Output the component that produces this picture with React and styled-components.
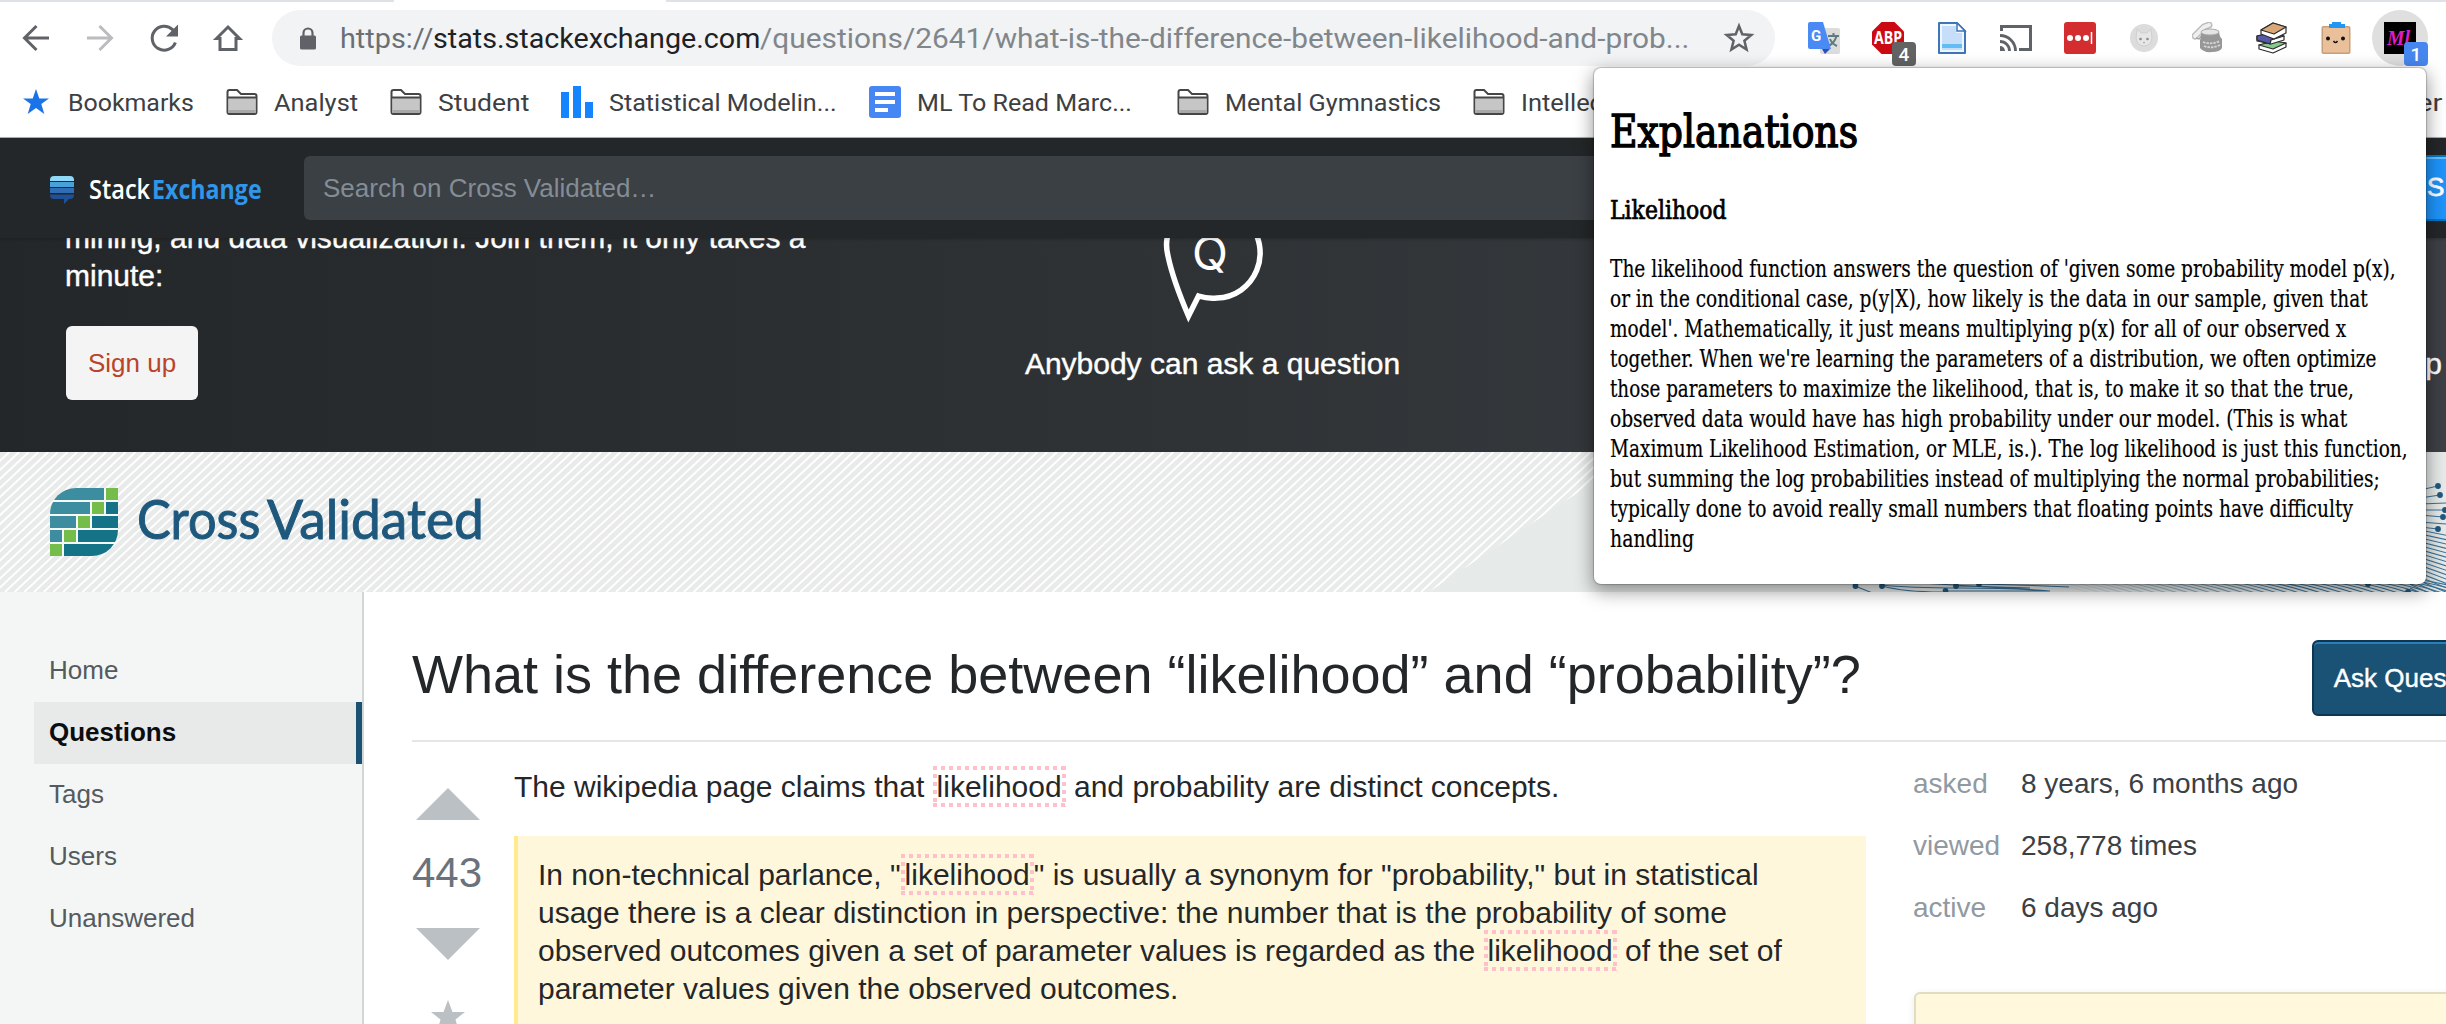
import React, { useLayoutEffect, useRef, useState } from "react";
import styled, { createGlobalStyle, css } from "styled-components";

const Global = createGlobalStyle`
  * { box-sizing: border-box; }
  html, body { margin: 0; padding: 0; background: #fff; overflow: hidden; }
  p, h1, h2, h3, blockquote, dl, dt, dd, ul { margin: 0; padding: 0; }
`;

const arial = `"Liberation Sans", Arial, sans-serif`;
const system = `Roboto, "Liberation Sans", sans-serif`;

/* ---------- text fitted to a known measure ---------- */

const FitBox = styled.span`
  display: inline-block;
  width: ${(p) => p.$w}px;
  white-space: nowrap;
  flex: none;
`;
const FitInner = styled.span`
  display: inline-block;
  transform-origin: 0 50%;
`;

function Fit({ w, children, className }) {
  const ref = useRef(null);
  const [style, setStyle] = useState({});
  useLayoutEffect(() => {
    setStyle({ transform: `scaleX(${w / ref.current.offsetWidth})` });
  }, [w]);
  return (
    <FitBox $w={w} className={className}>
      <FitInner ref={ref} style={style}>{children}</FitInner>
    </FitBox>
  );
}

/* ---------- page ---------- */

const Page = styled.div`
  position: relative;
  width: 2446px;
  height: 1024px;
  overflow: hidden;
  background: #fff;
  font-family: ${arial};
  color: #242729;
`;

/* ---------- browser chrome ---------- */

const TabEdge = styled.div`
  display: flex;
  gap: 272px;
  height: 2px;
`;
const TabPiece = styled.div`
  flex: ${(p) => (p.$w ? `0 0 ${p.$w}px` : 1)};
  background: #dee1e6;
`;
const Toolbar = styled.div`
  display: flex;
  align-items: center;
  height: 72px;
  padding-left: 20px;
  font-family: ${system};
`;
const NavIcons = styled.div`
  display: flex;
  gap: 32px;
  width: 252px;
`;
const Omnibox = styled.div`
  display: flex;
  align-items: center;
  width: 1503px;
  height: 56px;
  padding: 0 20px 0 26px;
  border-radius: 28px;
  background: #f1f3f4;
  font-size: 28.5px;
  color: #80868b;
`;
const Lock = styled.svg`
  width: 20px;
  height: 24px;
  margin-right: 22px;
`;
const UrlPart = styled(Fit)`
  color: #80868b;
`;
const DarkUrl = styled(Fit)`
  color: #202124;
`;
const SchemeUrl = styled(Fit)`
  color: #6b6f74;
`;
const StarButton = styled.svg`
  width: 32px;
  height: 32px;
  margin-left: auto;
`;
const Extensions = styled.div`
  display: flex;
  gap: 32px;
  margin-left: 33px;
`;
const ExtCell = styled.div`
  position: relative;
  display: flex;
  width: 32px;
  height: 32px;
  ${(p) =>
    p.$active &&
    css`
      &::before {
        content: "";
        position: absolute;
        inset: -12px;
        border-radius: 50%;
        background: #dfdfdf;
      }
    `}
`;
const ExtSvg = styled.svg`
  position: relative;
  width: 32px;
  height: 32px;
`;
const Badge = styled.span`
  position: absolute;
  left: 20px;
  top: 20px;
  width: 24px;
  height: 24px;
  border-radius: 4px;
  background: ${(p) => p.$bg};
  color: #fff;
  font: 500 19px/26px ${system};
  text-align: center;
`;
const Bookmarks = styled.div`
  position: relative;
  display: flex;
  align-items: center;
  height: 64px;
  padding: 0 0 7px 20px;
  border-bottom: 1px solid #b6b4b6;
  font-family: ${system};
  font-size: 24.5px;
  color: #3c4043;
`;
const Bookmark = styled.div`
  display: flex;
  align-items: center;
  gap: ${(p) => p.$gap || 16}px;
  margin-right: ${(p) => p.$after || 0}px;
`;
const BmIcon = styled.svg`
  width: 32px;
  height: 32px;
  flex: none;
`;
const LastBookmark = styled.span`
  position: absolute;
  left: 2417px;
  top: 14px;
`;

/* ---------- site top bar ---------- */

const TopBar = styled.div`
  position: relative;
  z-index: 1;
  display: flex;
  align-items: center;
  height: 100px;
  padding-left: 50px;
  background: #242729;
  box-shadow: 0 1px 3px rgba(0, 0, 0, 0.25);
`;
const SeMark = styled.svg`
  width: 24px;
  height: 28px;
  margin: 3px 15px 0 0;
`;
const SeWord = styled.div`
  display: flex;
  gap: 2px;
  margin: 1px 42px 0 0;
  font: 600 27px/32px "Open Sans", sans-serif;
  color: #fff;
`;
const SeBlue = styled.span`
  color: #2f96e8;
  font-weight: 700;
`;
const Search = styled.div`
  width: 2090px;
  height: 64px;
  padding-left: 19px;
  border-radius: 6px;
  background: #3b4045;
  color: #848d95;
  font-size: 26px;
  line-height: 65px;
`;
const SignUpBlue = styled.div`
  width: 52px;
  height: 66px;
  padding-left: 33px;
  border: solid #0077cc;
  border-width: 2px 0;
  box-shadow: inset 0 2px 0 #66bfff;
  background: #1e94fb;
  color: #fff;
  font-size: 26px;
  line-height: 60px;
  -webkit-text-stroke: 0.8px #fff;
`;

/* ---------- hero ---------- */

const Hero = styled.section`
  display: grid;
  grid-template-columns: 1000px 425px 1fr;
  height: 214px;
  overflow: hidden;
  background: linear-gradient(90deg, #242729 0%, #303336 50%, #3d4045 100%);
  color: #fff;
  font-size: 30px;
  line-height: 38px;
  -webkit-text-stroke: 0.4px #fff;
`;
const Pitch = styled.div`
  margin-top: -19px;
  padding-left: 65px;
  white-space: nowrap;
`;
const SignUp = styled.button`
  display: block;
  width: 132px;
  height: 74px;
  margin: 31px 0 0 1px;
  padding: 0;
  border: 0;
  border-radius: 6px;
  background: #f4f4f4;
  color: #b9442a;
  font: 26px/74px ${arial};
  -webkit-text-stroke: 0;
`;
const AskStep = styled.div`
  display: flex;
  flex-direction: column;
  align-items: center;
`;
const Bubble = styled.svg`
  width: 110px;
  height: 107px;
  -webkit-text-stroke: 0;
`;
const VoteStep = styled.div`
  padding: 107px 4px 0 0;
  text-align: right;
`;

/* ---------- site header ---------- */

const SiteHeader = styled.header`
  position: relative;
  display: flex;
  align-items: center;
  height: 140px;
  padding-left: 50px;
  background: #e6eae9;
`;
const HeaderArt = styled.svg`
  position: absolute;
  inset: 0;
  width: 2446px;
  height: 140px;
`;
const Brand = styled.div`
  position: relative;
  display: flex;
  align-items: center;
`;
const BrandMark = styled.svg`
  width: 68px;
  height: 68px;
  margin-right: 19px;
`;
const BrandWord = styled.div`
  display: flex;
  gap: 7px;
  margin-top: -8px;
  font: 400 55px/64px Lato, sans-serif;
  color: #1f587d;
  -webkit-text-stroke: 1px #1f587d;
`;

/* ---------- body ---------- */

const Body = styled.div`
  display: flex;
  height: 432px;
`;
const SideNav = styled.nav`
  flex: none;
  width: 364px;
  padding: 48px 0 0 34px;
  border-right: 2px solid #d2d6d5;
  background: #f4f6f5;
`;
const NavItem = styled.div`
  height: 62px;
  padding-left: 15px;
  font-size: 26px;
  line-height: 61px;
  color: #535a60;
  ${(p) =>
    p.$active &&
    css`
      background: #e8eae9;
      border-right: 6px solid #1a5276;
      color: #0c0d0e;
      font-weight: 700;
    `}
`;
const Main = styled.main`
  flex: none;
  width: 2146px;
  padding-left: 48px;
`;
const TitleRow = styled.div`
  display: flex;
  align-items: flex-start;
  justify-content: space-between;
  height: 150px;
  padding-top: 48px;
  border-bottom: 2px solid #e4e6e8;
`;
const Title = styled.h1`
  font: 400 54px/68px ${arial};
`;
const AskButton = styled.button`
  width: 198px;
  height: 76px;
  padding: 0;
  border: 2px solid #0e3652;
  border-radius: 6px;
  background: #1a5276;
  box-shadow: inset 0 2px 0 #2a7fb8;
  color: #fff;
  font: 26px/70px ${arial};
  -webkit-text-stroke: 0.4px #fff;
`;
const Columns = styled.div`
  display: grid;
  grid-template-columns: 102px 1352px 1fr;
`;
const Votes = styled.div`
  display: flex;
  flex-direction: column;
  align-items: flex-start;
  padding-top: 46px;
`;
const Arrow = styled.svg`
  width: 64px;
  height: 32px;
  margin-left: 4px;
`;
const Score = styled.div`
  height: 108px;
  font-size: 42px;
  line-height: 106px;
  color: #6a737c;
`;
const Fav = styled.svg`
  width: 34px;
  height: 32px;
  margin: 40px 0 0 19px;
`;
const Post = styled.div`
  padding-top: 26px;
  font-size: 30px;
  line-height: 38px;
`;
const Quote = styled.blockquote`
  height: 260px;
  margin-top: 30px;
  padding: 20px 20px 0 20px;
  border-left: 4px solid #ffeb8e;
  background: #fff7dc;
  white-space: nowrap;
`;
const Line = styled.div``;
const dots = (dir) =>
  `repeating-linear-gradient(${dir}, #ffc0cb 0 4px, transparent 4px 8px)`;
const Term = styled.span`
  padding: 4px;
  background-image: ${dots("90deg")}, ${dots("90deg")}, ${dots("180deg")}, ${dots("180deg")};
  background-size: 100% 4px, 100% 4px, 4px 100%, 4px 100%;
  background-position: 0 0, 0 100%, 0 0, 100% 0;
  background-repeat: no-repeat;
`;
const Aside = styled.aside`
  padding: 24px 0 0 47px;
`;
const Stats = styled.dl`
  display: grid;
  grid-template-columns: 108px 1fr;
  grid-auto-rows: 62px;
  margin-bottom: 40px;
  font-size: 28px;
  line-height: 36px;
  color: #3b4045;
`;
const StatKey = styled.dt`
  color: #9199a1;
`;
const Bulletin = styled.div`
  height: 80px;
  margin-left: 1px;
  border: 2px solid #e0dcbf;
  border-radius: 6px;
  background: #fff8dc;
  box-shadow: 0 2px 8px rgba(0, 0, 0, 0.08);
`;

/* ---------- extension popup ---------- */

const Popup = styled.div`
  position: absolute;
  z-index: 2;
  left: 1594px;
  top: 68px;
  width: 832px;
  height: 516px;
  padding: 33px 0 0 16px;
  border-radius: 7px;
  background: #fff;
  box-shadow: 0 0 1px 1px rgba(0, 0, 0, 0.2), 0 6px 18px 2px rgba(0, 0, 0, 0.38);
  font-family: "DejaVu Serif Condensed", "DejaVu Serif", serif;
  font-stretch: condensed;
  color: #000;
`;
const PopTitle = styled.h2`
  font-size: 44px;
  font-weight: 400;
  line-height: 62px;
  -webkit-text-stroke: 1.3px #000;
`;
const PopSub = styled.h3`
  margin-top: 29px;
  font-size: 26.5px;
  font-weight: 400;
  line-height: 36px;
  -webkit-text-stroke: 0.7px #000;
`;
const PopText = styled.div`
  margin-top: 26px;
  font-size: 24px;
  line-height: 30px;
  -webkit-text-stroke: 0.2px #000;
`;

/* ---------- drawings ---------- */

const navStroke = { fill: "none", stroke: "#5f6368", strokeWidth: 3 };

const Back = ({ color = "#5f6368", flip }) => (
  <ExtSvg viewBox="0 0 32 32">
    <g transform={flip ? "translate(32 0) scale(-1 1)" : undefined} fill="none" stroke={color} strokeWidth="3">
      <path d="M29 16H5M16.5 4L4.5 16l12 12" />
    </g>
  </ExtSvg>
);
const Reload = () => (
  <ExtSvg viewBox="0 0 32 32">
    <path d="M27.4 20.5A12 12 0 1 1 24.6 7.6L27 10" {...navStroke} />
    <path d="M30 2.5v12H18z" fill="#5f6368" />
  </ExtSvg>
);
const Home = () => (
  <ExtSvg viewBox="0 0 32 32">
    <path d="M4.5 16.5L16 5l11.5 11.5H24V27.500H8V16.500z" {...navStroke} strokeLinejoin="miter" />
  </ExtSvg>
);
const Folder = () => (
  <BmIcon viewBox="0 0 32 32">
    <path d="M1.500 26V6q0-2 2-2h7.500l4 4h13.500q2 0 2 2v16q0 2-2 2h-25q-2 0-2-2z" fill="#fff" stroke="#464646" strokeWidth="2" />
    <path d="M2.500 12h27v15h-27z" fill="#c6c6c6" />
    <path d="M2.500 24h27v3h-27z" fill="#a8a8a8" />
    <path d="M1.500 11.500h29" stroke="#464646" strokeWidth="2" />
  </BmIcon>
);

function HeaderDrawing() {
  const stripes = [];
  for (let x = -160; x < 1640; x += 9.7) stripes.push(x);
  const fan = [];
  for (let k = 0; k < 26; k++) fan.push(k);
  const sweep = [];
  for (let x = 2050; x < 2440; x += 11) sweep.push(x);
  const nodes = [
    [2438, 34], [2440, 43], [2445, 58], [2443, 65], [2438, 77], [1855.5, 134], [1882, 134],
    [1956, 134], [1945.5, 139], [1979, 132], [2368, 132], [2408, 140],
  ];
  return (
    <HeaderArt viewBox="0 0 2446 140">
      <clipPath id="stripeArea">
        <path d="M0 0H1639L1429 140H0z" />
      </clipPath>
      <path d="M0 0H1639L1429 140H0z" fill="#e8ebea" />
      <g clipPath="url(#stripeArea)" stroke="#fff" strokeWidth="1.900">
        {stripes.map((x) => (
          <path key={x} d={`M${x} 140L${x + 150} 0`} />
        ))}
      </g>
      <g stroke="#3a7399" strokeWidth="1.100" fill="none">
        <path d="M2420 38L2438 34M2420 46l20-3M2420 52l26-1M2420 58h26M2420 63l23 2M2420 70l26 2M2420 75l18 2" />
        {fan.map((k) => (
          <path key={k} d={`M2410 ${76 + k * 4.1 - k * 0.35}L2450 ${84 + k * 4.1 + k * 0.35}`} />
        ))}
        {sweep.map((x) => (
          <path key={x} d={`M${x - 20} 127Q${x + 15} 132 ${x + 40} 141`} opacity={Math.min(1, (x - 2030) / 250)} />
        ))}
        <path d="M1855 134l20 8M1882 134q22 6 60 6M1880 133q30 3 80 3t90 3M1956 134q50 1 90 5M1979 132q50 1 90 3M1920 131q60 4 110 5M1945 139h100" />
      </g>
      <g fill="#20597f">
        {nodes.map(([x, y]) => (
          <circle key={x + "-" + y} cx={x} cy={y} r="2.900" />
        ))}
      </g>
    </HeaderArt>
  );
}

function CrossValidatedMark() {
  const cells = [];
  for (let r = 0; r < 5; r++) {
    const y = r * 14;
    const g = 56 - r * 14;
    if (g > 0) cells.push([0, y, g - 2, "#3c8da0"]);
    cells.push([g, y, 12, "#74bd4b"]);
    if (g < 56) cells.push([g + 14, y, 54 - g, "#157388"]);
  }
  return (
    <BrandMark viewBox="0 0 68 68">
      <clipPath id="leaf">
        <path d="M26 0H68V42A26 26 0 0 1 42 68H0V26A26 26 0 0 1 26 0z" />
      </clipPath>
      <g clipPath="url(#leaf)">
        <path d="M0 0h68v68H0z" fill="#f6f8f7" />
        {cells.map(([x, y, w, c]) => (
          <rect key={x + "-" + y} x={x} y={y} width={w} height="12" fill={c} />
        ))}
      </g>
    </BrandMark>
  );
}

function ExtensionIcons() {
  return (
    <Extensions>
      <ExtCell>
        <ExtSvg viewBox="0 0 32 32">
          <rect x="12" y="6" width="20" height="26" rx="2" fill="#dcdcdc" />
          <path d="M20 14h11M25.500 11v3M28.500 14q-2 7-8 10M22 17q2 5 7 7" stroke="#5c7a80" strokeWidth="2" fill="none" />
          <path d="M14 27l8 0-5 5z" fill="#2a50b8" />
          <path d="M2 0h13l8 27H2q-2 0-2-2V2q0-2 2-2z" fill="#4a8af4" />
          <text x="3" y="19" fontFamily="Roboto, sans-serif" fontWeight="700" fontSize="15" fill="#fff">G</text>
        </ExtSvg>
      </ExtCell>
      <ExtCell>
        <ExtSvg viewBox="0 0 32 32">
          <path d="M9.500 0h13L32 9.500v13L22.500 32h-13L0 22.500v-13z" fill="#cc0a14" />
          <text x="2" y="22" textLength="28" lengthAdjust="spacingAndGlyphs" fontFamily="Open Sans, sans-serif" fontWeight="700" fontSize="17" fill="#fff">ABP</text>
        </ExtSvg>
        <Badge $bg="#636363">4</Badge>
      </ExtCell>
      <ExtCell>
        <ExtSvg viewBox="0 0 32 32">
          <path d="M3 1h18l8 8v22H3z" fill="#eef6ff" stroke="#3f76b8" strokeWidth="2" strokeLinejoin="round" />
          <path d="M6 4h14v7h6v17H6z" fill="#c6defa" />
          <path d="M21 1v8h8z" fill="#fff" stroke="#3f76b8" strokeWidth="1.500" />
          <path d="M6 22h20v4H6z" fill="#62bdf5" />
        </ExtSvg>
      </ExtCell>
      <ExtCell>
        <ExtSvg viewBox="0 0 32 32">
          <path d="M1.500 9V4.500h29v23H19" fill="none" stroke="#5f6368" strokeWidth="3" />
          <path d="M0 24a5 5 0 0 1 5 5H0z" fill="#5f6368" />
          <path d="M0 19.500a9.500 9.500 0 0 1 9.500 9.500M0 13.500a15.500 15.500 0 0 1 15.500 15.500" fill="none" stroke="#5f6368" strokeWidth="2.800" />
        </ExtSvg>
      </ExtCell>
      <ExtCell>
        <ExtSvg viewBox="0 0 32 32">
          <rect width="32" height="32" rx="3" fill="#d32d2f" />
          <circle cx="6" cy="16" r="3" fill="#fff" />
          <circle cx="14" cy="16" r="3" fill="#fff" />
          <circle cx="22" cy="16" r="3" fill="#fff" />
          <path d="M27.500 10v12" stroke="#fff" strokeWidth="1.500" />
        </ExtSvg>
      </ExtCell>
      <ExtCell>
        <ExtSvg viewBox="0 0 32 32">
          <circle cx="16" cy="16" r="14" fill="#dcdcdc" />
          <path d="M9 7l4 4h6l4-4 1 9q-1 8-8 8t-8-8z" fill="#e6e6e6" stroke="#cfcfcf" />
          <circle cx="12.500" cy="17" r="1.300" fill="#8a8a8a" />
          <circle cx="19.500" cy="17" r="1.300" fill="#8a8a8a" />
          <path d="M15 20h2l-1 1.500z" fill="#8a8a8a" />
        </ExtSvg>
      </ExtCell>
      <ExtCell>
        <ExtSvg viewBox="0 0 32 32">
          <path d="M3 14L12 5l5-2" stroke="#bdbdbd" strokeWidth="7" strokeLinecap="round" fill="none" />
          <path d="M3 14L12 5l5-2" stroke="#efefef" strokeWidth="4" strokeLinecap="round" fill="none" />
          <path d="M4 16l3 1 6-7" stroke="#a5a5a5" strokeWidth="1.500" fill="none" />
          <path d="M9 12q0 4-1 6v8q4 5 12 4 8 0 10-4v-9q-3-3-3-8-9-4-18 3z" fill="#979797" />
          <ellipse cx="18" cy="10" rx="9" ry="3" fill="#e4e4e4" stroke="#aaa" />
          <path d="M11 20q8 3 17-1M12 24q8 3 16-1" stroke="#d6d6d6" strokeWidth="1.800" strokeDasharray="2.500 1" fill="none" />
        </ExtSvg>
      </ExtCell>
      <ExtCell>
        <ExtSvg viewBox="0 0 32 32" stroke="#2b2b2b" strokeWidth="1.200" strokeLinejoin="round">
          <path d="M3 23l15-3 12 1v4L17 31 3 27z" fill="#fff" />
          <path d="M3 23l15-4 12 2-13 6z" fill="#86c98c" />
          <path d="M1 14l13-3 14 3v4l-13 4L1 19z" fill="#fff" />
          <path d="M1 14l13-3 14 3-13 4-1 4-13-4z" fill="#5759a8" />
          <path d="M5 8l12-7 13 4v6l-12 6L5 12z" fill="#fff" />
          <path d="M5 8l12-7 13 4-12 7z" fill="#d9a878" />
        </ExtSvg>
      </ExtCell>
      <ExtCell>
        <ExtSvg viewBox="0 0 32 32">
          <rect x="1.500" y="4" width="29" height="28" rx="2" fill="#c79f7b" />
          <rect x="3" y="5.500" width="26" height="25" fill="#eac09a" />
          <path d="M12 0h9v2h4v4H9V2h3z" fill="#2196f3" />
          <circle cx="8" cy="16.500" r="2" fill="#111" />
          <circle cx="23" cy="16.500" r="2" fill="#111" />
          <path d="M13.500 19q2 3 4 0" stroke="#111" strokeWidth="1.500" fill="none" />
        </ExtSvg>
      </ExtCell>
      <ExtCell $active>
        <ExtSvg viewBox="0 0 32 32">
          <path d="M0 0h32v32H0z" fill="#000" />
          <text x="3" y="23" textLength="23" lengthAdjust="spacingAndGlyphs" fontFamily="Liberation Serif, serif" fontWeight="700" fontStyle="italic" fontSize="20" fill="#e21cc4">Ml</text>
        </ExtSvg>
        <Badge $bg="#4687ef">1</Badge>
      </ExtCell>
    </Extensions>
  );
}

const explanation = [
  [786, "The likelihood function answers the question of 'given some probability model p(x),"],
  [758, "or in the conditional case, p(y|X), how likely is the data in our sample, given that"],
  [736, "model'. Mathematically, it just means multiplying p(x) for all of our observed x"],
  [766, "together. When we're learning the parameters of a distribution, we often optimize"],
  [744, "those parameters to maximize the likelihood, that is, to make it so that the true,"],
  [737, "observed data would have has high probability under our model. (This is what"],
  [798, "Maximum Likelihood Estimation, or MLE, is.). The log likelihood is just this function,"],
  [770, "but summing the log probabilities instead of multiplying the normal probabilities;"],
  [743, "typically done to avoid really small numbers that floating points have difficulty"],
  [84, "handling"],
];

export default function App() {
  return (
    <Page>
      <Global />
      <TabEdge>
        <TabPiece $w={394} />
        <TabPiece />
      </TabEdge>
      <Toolbar>
        <NavIcons>
          <Back />
          <Back flip color="#babcbe" />
          <Reload />
          <Home />
        </NavIcons>
        <Omnibox>
          <Lock viewBox="0 0 20 24">
            <rect x="2" y="9.500" width="16" height="14" rx="1.500" fill="#5f6368" />
            <path d="M5.500 10V7a4.500 4.500 0 0 1 9 0v3" fill="none" stroke="#5f6368" strokeWidth="2.200" />
          </Lock>
          <SchemeUrl w={93}>https://</SchemeUrl>
          <DarkUrl w={327}>stats.stackexchange.com</DarkUrl>
          <UrlPart w={929}>/questions/2641/what-is-the-difference-between-likelihood-and-prob...</UrlPart>
          <StarButton viewBox="0 0 32 32">
            <path d="M16 4l3.300 8.300 9 .7-6.900 5.800 2.200 8.800L16 22.800l-7.600 4.800 2.200-8.800L3.700 13l9-.7z" fill="none" stroke="#5f6368" strokeWidth="2.500" />
          </StarButton>
        </Omnibox>
        <ExtensionIcons />
      </Toolbar>
      <Bookmarks>
        <Bookmark $after={32}>
          <BmIcon viewBox="0 0 32 32">
            <path d="M16 3l3.300 9.500H29L21.300 18l3 10L16 22l-8.300 6 3-10L3 12.500h9.700z" fill="#1a73e8" />
          </BmIcon>
          <Fit w={126}>Bookmarks</Fit>
        </Bookmark>
        <Bookmark $after={32}><Folder /><Fit w={84}>Analyst</Fit></Bookmark>
        <Bookmark $after={32}><Folder /><Fit w={91}>Student</Fit></Bookmark>
        <Bookmark $after={32}>
          <BmIcon viewBox="0 0 32 32">
            <path d="M0 6h8v26H0zM12 0h8v32h-8zM24 16h8v16h-8z" fill="#1485ff" />
          </BmIcon>
          <Fit w={228}>Statistical Modelin...</Fit>
        </Bookmark>
        <Bookmark $after={45}>
          <BmIcon viewBox="0 0 32 32">
            <rect width="32" height="32" rx="3" fill="#4687f4" />
            <path d="M6 6h20v4H6zM6 14h20v4H6zM6 22h13v4H6z" fill="#fff" />
          </BmIcon>
          <Fit w={215}>ML To Read Marc...</Fit>
        </Bookmark>
        <Bookmark $after={32}><Folder /><Fit w={216}>Mental Gymnastics</Fit></Bookmark>
        <Bookmark><Folder /><Fit w={82}>Intellec</Fit></Bookmark>
        <LastBookmark><Fit w={25}>er</Fit></LastBookmark>
      </Bookmarks>

      <TopBar>
        <SeMark viewBox="0 0 24 28">
          <path d="M0 4q0-4 4-4h16q4 0 4 4v1H0z" fill="#8fd8f7" />
          <path d="M0 6h24v5H0z" fill="#46a2d9" />
          <path d="M0 12h24v5H0z" fill="#2f6db5" />
          <path d="M0 18.500h24q0 4.500-4 4.500h-1l-5 5v-5H4q-4 0-4-4z" fill="#1f5196" />
        </SeMark>
        <SeWord>
          <Fit w={61}>Stack</Fit>
          <SeBlue><Fit w={110}>Exchange</Fit></SeBlue>
        </SeWord>
        <Search>Search on Cross Validated…</Search>
        <SignUpBlue>S</SignUpBlue>
      </TopBar>

      <Hero>
        <Pitch>
          <div>mining, and data visualization. Join them, it only takes a</div>
          <div>minute:</div>
          <SignUp>Sign up</SignUp>
        </Pitch>
        <AskStep>
          <Bubble viewBox="1158 238 110 107">
            <path d="M1175 222Q1163 236 1168 256Q1173 280 1188.500 316L1198.500 296Q1208 299 1217 298A44 45 0 0 0 1248 222" fill="none" stroke="#fff" strokeWidth="5.500" />
            <text x="1192" y="270" fontFamily="Inter, sans-serif" fontSize="47" fill="#fff">Q</text>
          </Bubble>
          <div>Anybody can ask a question</div>
        </AskStep>
        <VoteStep>p</VoteStep>
      </Hero>

      <SiteHeader>
        <HeaderDrawing />
        <Brand>
          <CrossValidatedMark />
          <BrandWord>
            <Fit w={123}>Cross</Fit>
            <Fit w={217}>Validated</Fit>
          </BrandWord>
        </Brand>
      </SiteHeader>

      <Body>
        <SideNav>
          <NavItem>Home</NavItem>
          <NavItem $active>Questions</NavItem>
          <NavItem>Tags</NavItem>
          <NavItem>Users</NavItem>
          <NavItem>Unanswered</NavItem>
        </SideNav>
        <Main>
          <TitleRow>
            <Title>What is the difference between “likelihood” and “probability”?</Title>
            <AskButton>Ask Question</AskButton>
          </TitleRow>
          <Columns>
            <Votes>
              <Arrow viewBox="0 0 64 32"><path d="M0 32L32 0l32 32z" fill="#bbc0c4" /></Arrow>
              <Score>443</Score>
              <Arrow viewBox="0 0 64 32"><path d="M0 0h64L32 32z" fill="#bbc0c4" /></Arrow>
              <Fav viewBox="0 0 34 32"><path d="M17 0l4.500 12H34l-9.500 7.500L28 32l-11-7-11 7 3.500-12.500L0 12h12.500z" fill="#bbc0c4" /></Fav>
            </Votes>
            <Post>
              <p>The wikipedia page claims that <Term>likelihood</Term> and probability are distinct concepts.</p>
              <Quote>
                <Line>In non-technical parlance, "<Term>likelihood</Term>" is usually a synonym for "probability," but in statistical</Line>
                <Line>usage there is a clear distinction in perspective: the number that is the probability of some</Line>
                <Line>observed outcomes given a set of parameter values is regarded as the <Term>likelihood</Term> of the set of</Line>
                <Line>parameter values given the observed outcomes.</Line>
              </Quote>
            </Post>
            <Aside>
              <Stats>
                <StatKey>asked</StatKey><dd>8 years, 6 months ago</dd>
                <StatKey>viewed</StatKey><dd>258,778 times</dd>
                <StatKey>active</StatKey><dd>6 days ago</dd>
              </Stats>
              <Bulletin />
            </Aside>
          </Columns>
        </Main>
      </Body>

      <Popup>
        <PopTitle><Fit w={248}>Explanations</Fit></PopTitle>
        <PopSub><Fit w={117}>Likelihood</Fit></PopSub>
        <PopText>
          {explanation.map(([w, text]) => (
            <Line key={text}><Fit w={w}>{text}</Fit></Line>
          ))}
        </PopText>
      </Popup>
    </Page>
  );
}
